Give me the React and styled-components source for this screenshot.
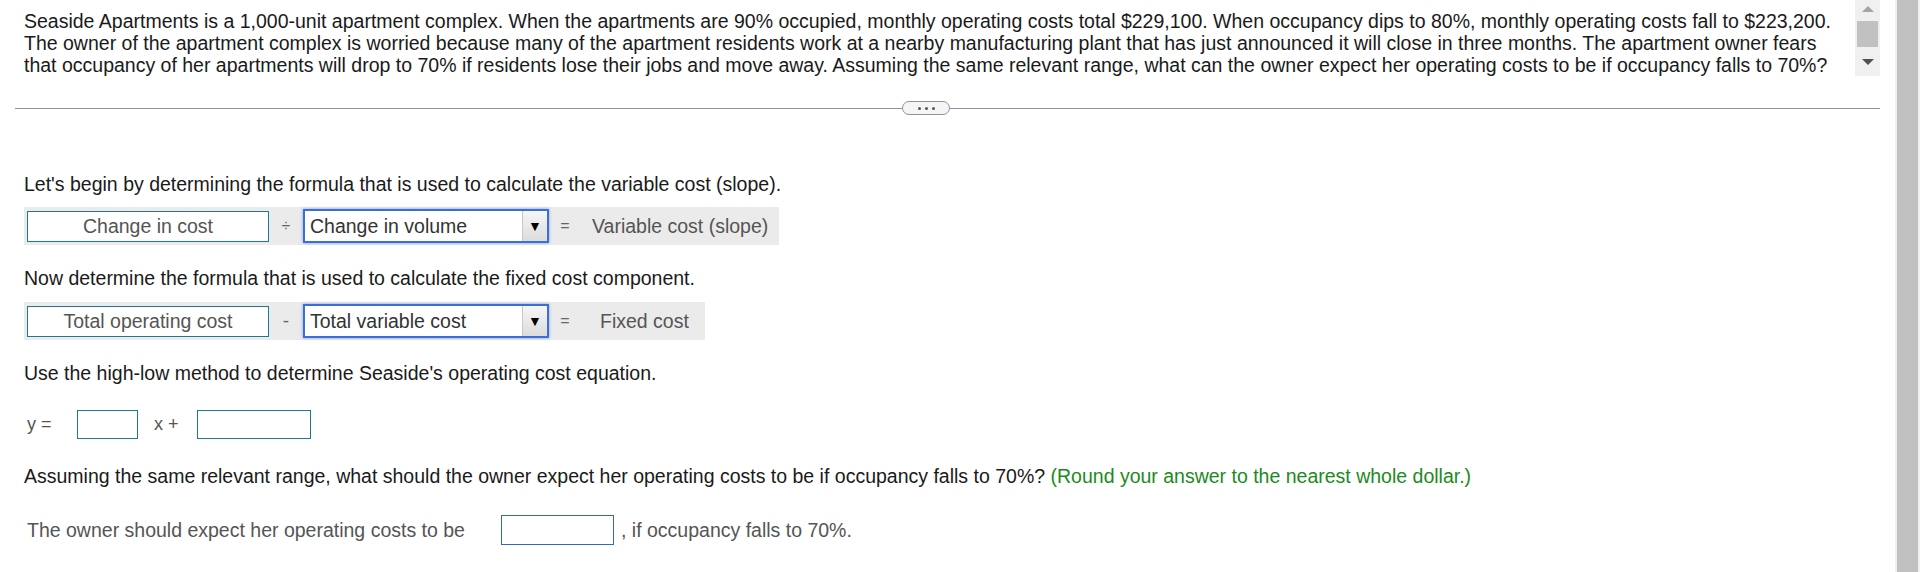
import styled, { createGlobalStyle } from 'styled-components';

const GlobalStyle = createGlobalStyle`
  body {
    margin: 0;
    background: #fff;
    font-family: 'Liberation Sans', Arial, sans-serif;
    font-size: 19.5px;
    color: #1a1a1a;
  }
`;

const Page = styled.div`
  display: flex;
  height: 572px;
  overflow: hidden;
`;

const Main = styled.div`
  flex: 1;
  display: flex;
  flex-direction: column;
`;

const PageScroll = styled.div`
  width: 25px;
  background: #f1f1f1;
  display: flex;
  justify-content: flex-end;
  padding-right: 2px;
  box-sizing: border-box;
`;

const PageThumb = styled.div`
  width: 21px;
  height: 100%;
  background: #c1c1c1;
`;

const ProblemPane = styled.div`
  display: flex;
  height: 76px;
  padding-left: 24px;
  margin-right: 15px;
`;

const ProblemText = styled.div`
  flex: 1;
  padding-top: 10px;
  line-height: 22px;
  white-space: nowrap;
  overflow: hidden;
`;

const MiniScroll = styled.div`
  width: 25px;
  background: #f0f0f0;
  display: flex;
  flex-direction: column;
  align-items: center;
  padding-top: 6px;
  box-sizing: border-box;
`;

const Arrow = styled.div`
  width: 0;
  height: 0;
  border-left: 6px solid transparent;
  border-right: 6px solid transparent;
  ${(p) =>
    p.down
      ? `border-top: 6px solid #505050; margin-top: 12px;`
      : `border-bottom: 6px solid #a3a3a3;`}
`;

const MiniThumb = styled.div`
  width: 21px;
  height: 26px;
  margin-top: 9px;
  background: #c1c1c1;
`;

const Divider = styled.div`
  display: flex;
  align-items: center;
  margin: 25px 15px 0;
  height: 14px;
`;

const Rule = styled.div`
  height: 1px;
  background: #8e94a6;
  flex: ${(p) => (p.fixed ? '0 0 887px' : '1')};
`;

const Pill = styled.div`
  width: 46px;
  height: 12px;
  border: 1px solid #8e94a6;
  border-radius: 7px;
  background: #f5f5f5;
  display: flex;
  align-items: center;
  justify-content: center;
  gap: 4px;
`;

const Dot = styled.span`
  width: 3px;
  height: 3px;
  border-radius: 50%;
  background: #555;
`;

const Content = styled.div`
  padding-left: 24px;
  display: flex;
  flex-direction: column;
  align-items: flex-start;
`;

const Prompt = styled.div`
  line-height: 22px;
  margin-top: ${(p) => p.top}px;
  color: #1a1a1a;
`;

const Hint = styled.span`
  color: #1c8a1c;
`;

const FormulaRow = styled.div`
  display: flex;
  align-items: center;
  background: #ebebeb;
  height: 38px;
  padding: 0 ${(p) => p.tail}px 0 3px;
  margin-top: ${(p) => p.top}px;
  color: #555;
`;

const FixedBox = styled.div`
  width: 242px;
  height: 31px;
  box-sizing: border-box;
  border: 1px solid #1f7896;
  background: #fff;
  display: flex;
  align-items: center;
  justify-content: center;
  color: #555;
`;

const Operator = styled.span`
  width: 34px;
  text-align: center;
  font-size: ${(p) => (p.small ? 16 : 19)}px;
  color: #666;
`;

const Select = styled.div`
  width: 246px;
  height: 34px;
  box-sizing: border-box;
  border: 2px solid #3a6fd8;
  box-shadow: 0 0 3px rgba(58, 111, 216, 0.6);
  background: #fff;
  display: flex;
  align-items: stretch;
`;

const SelectText = styled.div`
  flex: 1;
  padding-left: 5px;
  display: flex;
  align-items: center;
  color: #333;
`;

const SelectButton = styled.div`
  width: 24px;
  border-left: 1px solid #c8c8c8;
  background: linear-gradient(#f6f6f6, #dcdcdc);
  display: flex;
  align-items: center;
  justify-content: center;
  font-size: 14px;
  color: #000;
`;

const Equals = styled.span`
  width: 32px;
  text-align: center;
  font-size: 16px;
  color: #666;
`;

const Result = styled.span`
  padding-left: ${(p) => p.pad}px;
  color: #555;
`;

const EquationRow = styled.div`
  display: flex;
  align-items: center;
  padding-left: 3px;
  margin-top: ${(p) => p.top}px;
  color: #555;
  font-size: 18px;
  height: 30px;
`;

const Term = styled.span`
  width: ${(p) => p.w}px;
  padding-left: ${(p) => p.pad || 0}px;
  box-sizing: border-box;
`;

const AnswerBox = styled.div`
  width: ${(p) => p.w}px;
  height: ${(p) => p.h || 29}px;
  box-sizing: border-box;
  border: 1px solid ${(p) => p.color || '#1f7896'};
  background: #fff;
`;

const OwnerRow = styled.div`
  display: flex;
  align-items: center;
  padding-left: 3px;
  margin-top: 28px;
  height: 30px;
  color: #555;
`;

const OwnerText = styled.span`
  width: 474px;
`;

const OwnerTail = styled.span`
  margin-left: 7px;
`;

export default function App() {
  return (
    <Page>
      <GlobalStyle />
      <Main>
        <ProblemPane>
          <ProblemText>
            Seaside Apartments is a 1,000-unit apartment complex. When the apartments are 90% occupied, monthly operating costs total $229,100. When occupancy dips to 80%, monthly operating costs fall to $223,200.
            <br />
            The owner of the apartment complex is worried because many of the apartment residents work at a nearby manufacturing plant that has just announced it will close in three months. The apartment owner fears
            <br />
            that occupancy of her apartments will drop to 70% if residents lose their jobs and move away. Assuming the same relevant range, what can the owner expect her operating costs to be if occupancy falls to 70%?
          </ProblemText>
          <MiniScroll>
            <Arrow />
            <MiniThumb />
            <Arrow down />
          </MiniScroll>
        </ProblemPane>

        <Divider>
          <Rule fixed />
          <Pill>
            <Dot />
            <Dot />
            <Dot />
          </Pill>
          <Rule />
        </Divider>

        <Content>
          <Prompt top={58}>
            Let's begin by determining the formula that is used to calculate the variable cost (slope).
          </Prompt>
          <FormulaRow top={12} tail={11}>
            <FixedBox>Change in cost</FixedBox>
            <Operator small>÷</Operator>
            <Select>
              <SelectText>Change in volume</SelectText>
              <SelectButton>▼</SelectButton>
            </Select>
            <Equals>=</Equals>
            <Result pad={11}>Variable cost (slope)</Result>
          </FormulaRow>

          <Prompt top={22}>
            Now determine the formula that is used to calculate the fixed cost component.
          </Prompt>
          <FormulaRow top={13} tail={16}>
            <FixedBox>Total operating cost</FixedBox>
            <Operator>-</Operator>
            <Select>
              <SelectText>Total variable cost</SelectText>
              <SelectButton>▼</SelectButton>
            </Select>
            <Equals>=</Equals>
            <Result pad={19}>Fixed cost</Result>
          </FormulaRow>

          <Prompt top={22}>
            Use the high-low method to determine Seaside's operating cost equation.
          </Prompt>
          <EquationRow top={25}>
            <Term w={50}>y =</Term>
            <AnswerBox w={61} />
            <Term w={59} pad={16}>x +</Term>
            <AnswerBox w={114} />
          </EquationRow>

          <Prompt top={26}>
            Assuming the same relevant range, what should the owner expect her operating costs to be if occupancy falls to 70%?{' '}
            <Hint>(Round your answer to the nearest whole dollar.)</Hint>
          </Prompt>
          <OwnerRow>
            <OwnerText>The owner should expect her operating costs to be</OwnerText>
            <AnswerBox w={113} h={30} color="#3366cc" />
            <OwnerTail>, if occupancy falls to 70%.</OwnerTail>
          </OwnerRow>
        </Content>
      </Main>
      <PageScroll>
        <PageThumb />
      </PageScroll>
    </Page>
  );
}
